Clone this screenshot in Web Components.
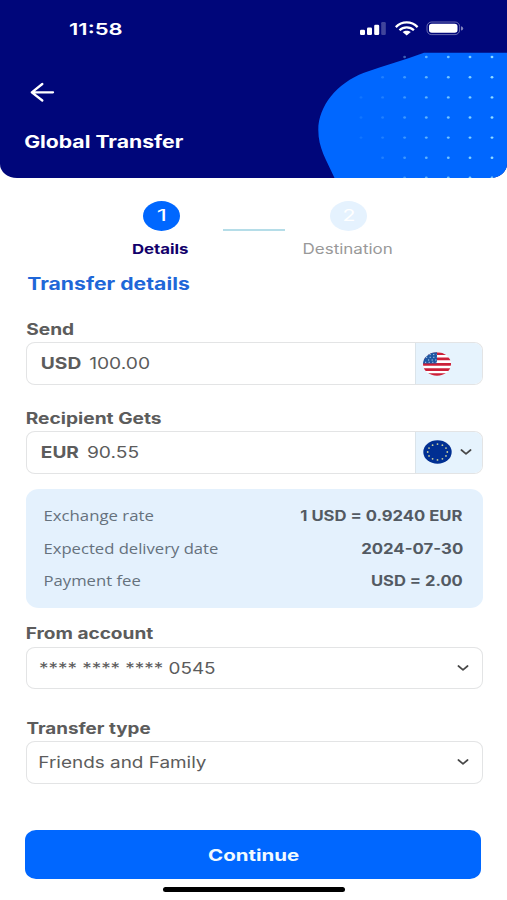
<!DOCTYPE html>
<html lang="en">
<head>
<meta charset="utf-8">
<title>Global Transfer</title>
<style>
  body { margin: 0; background: #fff; font-family: Inter, "Liberation Sans", sans-serif; color: #5c5c5c; }
</style>
</head>
<body>
<transfer-screen></transfer-screen>
<script>
const define = (name, html, setup) => customElements.define(name, class extends HTMLElement {
  connectedCallback() {
    if (this.shadowRoot) return;
    const t = document.createElement('template');
    t.innerHTML = html;
    this.attachShadow({ mode: 'open' }).append(t.content.cloneNode(true));
    if (setup) setup(this, this.shadowRoot);
  }
});

// Text stretched horizontally so that its ink spans exactly `w` pixels.
// Measured at ten times the size, because ink bounds are rounded to whole pixels.
const ctx = document.createElement('canvas').getContext('2d');
define('wide-text', `<style>
    :host { display: block; flex: none; height: 20px; line-height: 20px; }
    span { display: block; width: max-content; white-space: pre; transform-origin: 0 0; }
  </style><span></span>`, (host, root) => {
  const w = +host.getAttribute('w'), size = host.getAttribute('size') || 16;
  const weight = host.getAttribute('weight') || 400;
  const family = host.getAttribute('family') || 'Inter';
  const span = root.querySelector('span'), text = host.getAttribute('text');
  span.textContent = text;
  host.style.width = w + 'px';
  host.style.font = `${weight} ${size}px/20px "${family}", "Liberation Sans", sans-serif`;
  ctx.font = `${weight} ${size * 10}px "${family}"`;
  const m = ctx.measureText(text);
  const left = m.actualBoundingBoxLeft / 10, right = m.actualBoundingBoxRight / 10;
  const s = w / (right + left);
  span.style.transform = `translateX(${left * s}px) scaleX(${s})`;
});

define('status-bar', `
  <style>
    :host { display: flex; align-items: center; justify-content: space-between; height: 20px; padding: 19px 43px 0 70px; }
    svg { display: block; }
  </style>
  <wide-text text="11:58" w="51.5" size="16.6" weight="600"></wide-text>
  <svg width="104" height="20" viewBox="0 0 104 20" fill="#fff">
    <rect x="0" y="10.8" width="5" height="5.2" rx="1.3"/>
    <rect x="7" y="8.6" width="5" height="7.4" rx="1.3"/>
    <rect x="14.2" y="5.8" width="5" height="10.2" rx="1.3"/>
    <rect x="21.2" y="3" width="4.6" height="13" rx="1.3" opacity=".25"/>
    <g fill="none" stroke="#fff" stroke-width="2.3">
      <path d="M35.8 8.1C42 1.9 51.4 1.9 57.6 8.1"/>
      <path d="M39.5 11.3C43.5 7.4 49.9 7.4 53.9 11.3"/>
    </g>
    <path d="M42.6 13.1C45 11.2 48.4 11.2 50.8 13.1L46.7 16.4Z"/>
    <rect x="67" y="3" width="32.6" height="12.6" rx="4.5" fill="none" stroke="#fff" stroke-opacity=".4"/>
    <rect x="69" y="4.8" width="28.5" height="9" rx="2.8"/>
    <path d="M101 7.2Q103.2 7.6 103.2 9.4T101 11.6Z" opacity=".5"/>
  </svg>`);

define('top-header', `
  <style>
    :host { display: block; position: relative; height: 178px; background: #00067a; color: #fff; border-radius: 0 0 17px 17px / 0 0 14px 14px; overflow: hidden; }
    .art { position: absolute; right: 0; bottom: 0; }
    .content { position: relative; }
    .back { display: block; margin: 43px 0 0 29px; }
    wide-text { margin: 30px 0 0 25px; }
  </style>
  <svg class="art" width="190" height="126" viewBox="317 52 190 126">
    <path fill="#0067ff" d="M424 52.8C404 60 385 65.5 364 72.7C337 83 318.3 106 318.3 130C318.3 148 326 159 334.5 178H507V52.8Z"/>
    <g class="dots" fill="#8fdcff"></g>
  </svg>
  <div class="content">
    <status-bar></status-bar>
    <svg class="back" width="26" height="20" viewBox="0 0 26 20" fill="none" stroke="#fff" stroke-width="2.3" stroke-linecap="round" stroke-linejoin="round">
      <path d="M2.8 10.3H24M13.3 2L2.8 10.3L13.3 18.5"/>
    </svg>
    <wide-text text="Global Transfer" w="158" size="17" weight="700"></wide-text>
  </div>`, (host, root) => {
  const fade = [[361, .12], [382.6, .22], [404.6, .42], [426.3, .65], [448.3, .8], [470, .9], [492, 1]];
  const rows = [57, 77.2, 97.4, 117.5, 137.6, 157.8, 177.7];
  const first = [2, 1, 0, 0, 0, 1, 2];
  root.querySelector('.dots').innerHTML = rows.map((y, r) => fade.slice(first[r]).map(([x, o]) =>
    `<ellipse cx="${x}" cy="${y}" rx="1.4" ry="1.2" opacity="${o}"/>`).join('')).join('');
});

define('step-item', `
  <style>
    :host { display: flex; flex-direction: column; align-items: center; gap: 8px; color: #999; }
    .dot { display: flex; align-items: center; justify-content: center; width: 37px; height: 30px; margin-left: 2px; border-radius: 50%; background: #e5f2fe; color: #fff; }
    :host([active]) { color: #12006b; }
    :host([active]) .dot { margin-left: 1px; background: #0067ff; }
  </style>
  <div class="dot"></div><slot></slot>`, (host, root) => {
  root.querySelector('.dot').innerHTML = `<wide-text text="${host.getAttribute('n')}" w="${host.getAttribute('nw')}" size="15.5"></wide-text>`;
});

define('step-bar', `
  <style>
    :host { display: flex; height: 58px; padding: 23px 115.5px 0 133px; justify-content: space-between; }
    i { width: 62px; height: 1.5px; margin: 28px 0 0 16px; background: #b5dde8; }
  </style>
  <step-item n="1" nw="7" active><wide-text text="Details" w="55" size="13.8" weight="700"></wide-text></step-item>
  <i></i>
  <step-item n="2" nw="10"><wide-text text="Destination" w="87.5" size="14"></wide-text></step-item>`);

define('chevron-down', `
  <style>:host { display: block; } svg { display: block; }</style>
  <svg width="12" height="8" viewBox="0 0 12 8" fill="none" stroke="#484848" stroke-width="1.7" stroke-linecap="round" stroke-linejoin="round"><path d="M1.4 2L6 5.8L10.6 2"/></svg>`);

define('flag-us', `
  <style>:host, svg { display: block; }</style>
  <svg width="28" height="24" viewBox="0 0 28 24">
    <defs><clipPath id="c"><ellipse cx="14" cy="12" rx="14" ry="11.8"/></clipPath></defs>
    <g clip-path="url(#c)">
      <rect width="28" height="24" fill="#fff"/>
      <path stroke="#cb1f38" stroke-width="2.7" d="M0 1.6H28M0 6.8H28M0 12.4H28M0 17.6H28M0 22.6H28"/>
      <rect width="14" height="11.5" fill="#1e57a3"/>
      <path stroke="#b9d3ee" stroke-width="1" stroke-dasharray="1.2 2.4" d="M6.5 2.6H14M3 5.3H14M5 8H14M2 10.3H14"/>
    </g>
  </svg>`);

define('flag-eu', `
  <style>:host, svg { display: block; }</style>
  <svg width="29" height="24" viewBox="0 0 29 24"><ellipse cx="14.5" cy="12" rx="14.2" ry="11.8" fill="#002f92"/><g fill="#c9cf9a"></g></svg>`, (host, root) => {
  root.querySelector('g').innerHTML = Array.from({ length: 12 }, (_, i) => {
    const a = i * Math.PI / 6;
    return `<circle cx="${14.5 + 9.8 * Math.sin(a)}" cy="${12 - 7.9 * Math.cos(a)}" r=".9"/>`;
  }).join('');
});

define('form-field', `
  <style>
    :host { display: flow-root; }
    ::slotted([slot=label]) { margin-top: .8px; }
    .box { display: flex; box-sizing: border-box; width: 456.5px; height: 42.5px; margin: 2.5px 0 0 -1px; border: 1.5px solid #e3e4e5; border-radius: 9px / 8px; overflow: hidden; background: #fff; }
    .value { flex: 1; display: flex; align-items: center; padding: 0 0 .8px 15px; }
    ::slotted([slot=value]) { margin-right: 9.5px; }
    .end { display: flex; align-items: center; gap: 7.5px; }
    :host([currency]) .end { box-sizing: border-box; width: 67px; padding-left: 7.5px; background: #e6f3fd; border-left: 1px solid #dbe4ea; }
    :host(:not([currency])) .end { padding-right: 13px; }
    :host(:not([currency])) .value { padding-left: 13px; }
  </style>
  <slot name="label"></slot>
  <div class="box"><div class="value"><slot name="value"></slot></div><div class="end"><slot name="end"></slot></div></div>`);

define('info-row', `
  <style>:host { display: flex; justify-content: space-between; }</style><slot></slot>`);

define('info-card', `
  <style>
    :host { display: flex; flex-direction: column; gap: 12.7px; box-sizing: border-box; height: 119.5px; width: 456.5px; padding: 17.2px 20.5px 0 18.5px; border-radius: 13px / 11px; background: #e4f1fd; color: #535a62; }
  </style><slot></slot>`);

define('primary-button', `
  <style>
    :host { display: block; }
    button { display: flex; align-items: center; justify-content: center; width: 456px; height: 48.5px; padding: 0; border: 0; border-radius: 11px / 10px; background: #0067ff; color: #f1faff; }
  </style><button><slot></slot></button>`);

define('transfer-screen', `
  <style>
    :host { display: block; width: 507px; height: 900px; overflow: hidden; background: #fff; }
    main { display: flex; flex-direction: column; padding: 0 0 0 27px; }
    .title { color: #1f67d8; margin: 14.5px 0 25.5px .5px; }
    info-card { margin: 15.3px 0 15.2px -.8px; }
    .gap-s { margin-bottom: 23px; }
    .gap-m { margin-bottom: 28.5px; }
    .gap-l { margin-bottom: 46.8px; }
    .key { color: #66727d; }
    primary-button { margin-left: -1.6px; }
    .home { width: 182px; height: 5.5px; margin: 8px 0 0 136px; border-radius: 3px; background: #000; }
  </style>
  <top-header></top-header>
  <step-bar></step-bar>
  <main>
    <wide-text class="title" text="Transfer details" w="161" size="17" weight="700"></wide-text>
    <form-field class="gap-s" currency>
      <wide-text slot="label" text="Send" w="46" size="15.3" weight="700"></wide-text>
      <wide-text slot="value" text="USD" w="38.5" size="16" weight="700"></wide-text>
      <wide-text slot="value" text="100.00" w="59" size="16"></wide-text>
      <flag-us slot="end"></flag-us>
    </form-field>
    <form-field currency>
      <wide-text slot="label" text="Recipient Gets" w="134" size="15.3" weight="700"></wide-text>
      <wide-text slot="value" text="EUR" w="36.5" size="16" weight="700"></wide-text>
      <wide-text slot="value" text="90.55" w="50" size="16"></wide-text>
      <flag-eu slot="end"></flag-eu>
      <chevron-down slot="end"></chevron-down>
    </form-field>
    <info-card>
      <info-row><wide-text class="key" text="Exchange rate" w="108" size="14.3" family="Open Sans"></wide-text><wide-text text="1 USD = 0.9240 EUR" w="161" size="14" weight="650"></wide-text></info-row>
      <info-row><wide-text class="key" text="Expected delivery date" w="172.5" size="14.3" family="Open Sans"></wide-text><wide-text text="2024-07-30" w="100.5" size="14" weight="650"></wide-text></info-row>
      <info-row><wide-text class="key" text="Payment fee" w="95" size="14.3" family="Open Sans"></wide-text><wide-text text="USD = 2.00" w="90" size="14" weight="650"></wide-text></info-row>
    </info-card>
    <form-field class="gap-m">
      <wide-text slot="label" text="From account" w="126" size="15.3" weight="700"></wide-text>
      <wide-text slot="value" text="**** **** **** 0545" w="174.5" size="16"></wide-text>
      <chevron-down slot="end"></chevron-down>
    </form-field>
    <form-field class="gap-l">
      <wide-text slot="label" text="Transfer type" w="123" size="15.3" weight="700"></wide-text>
      <wide-text slot="value" text="Friends and Family" w="166" size="16"></wide-text>
      <chevron-down slot="end"></chevron-down>
    </form-field>
    <primary-button><wide-text text="Continue" w="89.5" size="16" weight="700"></wide-text></primary-button>
    <div class="home"></div>
  </main>`);
</script>
</body>
</html>
